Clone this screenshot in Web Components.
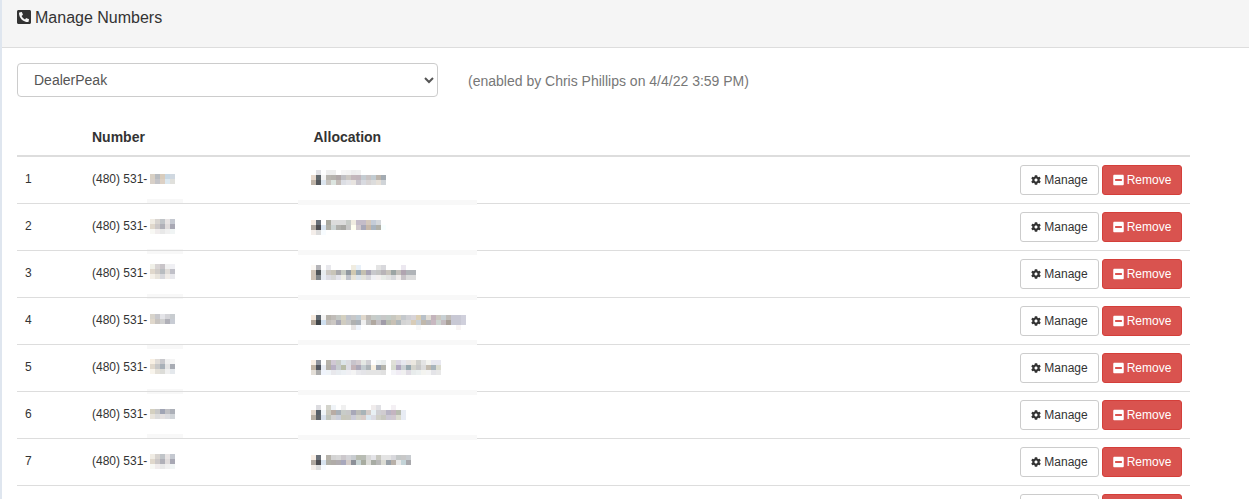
<!DOCTYPE html>
<html>
<head>
<meta charset="utf-8">
<title>Manage Numbers</title>
<style>
html, body { margin: 0; padding: 0; height: 499px; overflow: hidden; background: #fff; }
body { font-family: "Liberation Sans", Arial, sans-serif; color: #333; font-size: 12px; }
</style>
</head>
<body>
<manage-panel>
    <span slot="title">Manage Numbers</span>
    <account-picker note="(enabled by Chris Phillips on 4/4/22 3:59 PM)"></account-picker>
    <number-table></number-table>
</manage-panel>

<script>
// rows of the table. patches are the blurred out bits, rows split by | and - is empty
const rows = [
    {
        numTop: 17, allocTop: 13, strip: [42, 43],
        num: 'd8d0c4 b8bcc0 d8ccbc c8d8e4 d0d8e0|d8d0c8 c4c4c8 dcd0c4 dce8f0 e0e0dc',
        alloc: '- e0e0e4 - eeeeee eeeeee - f6f6f6 f4f4f4 eeeeee f0f0f0 - - - - -|e6d8cc 5f666a f5f5f5 b9b6b0 b5b2ad b0a8a8 c0c0c4 cdc9c4 c4b8bc c2b6bc c5ccd2 c9c4c4 c2ccd2 bdb5ac a3abb2|bfb4a8 55585c dde6f0 c9c5c0 dce5e0 c4bcb8 dcdee4 e4e4e8 e8e4e0 c8c4cc d8dae0 d8d4d4 dcdcdc e6e0d8 d0d4d8'
    },
    {
        numTop: 15, allocTop: 16, strip: [45, 46],
        num: 'f0ece4 d8d4d0 c0c4c8 e8e4e4 c4c8d0|e0d8cc ccc8c8 b0b0b8 e0dcdc a8a8b4|f8f8f4 f0ecec e8e8e8 f0f0f0 f0f4f4',
        alloc: 'f7ede4 6a7078 ffffff a9a9a0 dcdcdc dcdcdc dcdcdc c8ccc8 f0ece0 c4bcc8 c4bcc8 d4c8bc c4ccd8 d4d8dc -|b0a8a0 4c4c50 d8e4f0 b0b0a8 ccd4d4 b0b0ac a8a8a4 c8c8c8 fffff0 d0c8cc a8a8b8 c8b8a8 a8b4c0 b0b0a8 f8ffff|f4eeea dcdcdc f8fcff - - - - - - - - - - - -'
    },
    {
        numTop: 13, allocTop: 14, strip: [43, 44],
        num: 'f0f0e8 d8d4d4 c8c4c8 f0f0f0 f0f0f4|e0d8cc d0ccc8 b8bcc0 e0dcd8 c0c0c8|f4f0e8 e8e4dc d8d8dc f0ece8 e8e8ec',
        alloc: 'fbf8f4 b4b4b8 - e8e8ec - - - - f0ece0 e8f0f8 - - - e4e4e4 d8d8dc - - - ece8f0 - -|d0c4b8 505458 e8ecf0 ccc8c4 c8c4b8 a8a8ac c8ccc4 9098a0 d0c8b0 98a8b4 c4c0b0 a8a4b4 c8c8cc c4c4c4 b8b4b8 c8c4bc 9ca4a4 c4c0bc b0a4b0 b0b4b8 b0b4b8|d0c4b8 808488 e8ecf4 dcdce4 d8d8d8 e4e4ec f0f0e8 c0c4cc e8e4d8 dce4ec e4e4dc d8d8dc f0f0f4 f4f0f0 e8ece8 e4e4e4 d8d8dc f0ecec c8c4c8 dcdcdc dcdcdc'
    },
    {
        numTop: 16, allocTop: 12, strip: [46, 42],
        num: 'd8d4cc c8c8cc e4e4e8 d4d4d8 c8ccd0|e0d8cc c8c4c0 d0d0d0 b0b0b8 c8ccd4',
        alloc: '- fafafa - - - - - - - - - - - - - - - - - - - - - - - - - - - - -|f4e8dc 606870 f4f4f4 b8b4ac c0bcb8 c4c8c4 d4d0c0 c0c4cc c8c8c8 c0ccd4 e0d8cc c0bcb8 c8ccc8 c4cccc c8c8c8 c4ccc8 c8c8c0 d4d0c4 c4c8cc d0d0d4 d8d4d8 dccfb4 b8c0c8 e0dcd4 c4b4bc ccc8c0 c8d0d4 c0bcb8 c8c8d4 c8c8d4 d0d0dc|b0a498 404448 d0e0f0 c4c0bc ccc8c4 a8a8b4 d0ccc0 c8c8c8 b0b0b0 aab0b8 f0f0f0 c0c0c0 b0a8a0 c4c0c4 a09ca8 b8bcb0 c8c0b4 b0b8bc d4d4d4 d8d8d8 d8ccb8 c8d0d8 c0b8ac b8b8bc c8b8c0 ccd4d0 c4bcc0 a8a098 c8c8d4 c8c8d4 d0d0dc|- - - - - - - - e8e4e4 f0f4fc - - - - - - - - - - - f8f8f8 - - - - - - - f8f4f4 -'
    },
    {
        numTop: 14, allocTop: 15, strip: [44, 45],
        num: 'f8f0e4 e0dcd8 c8c8cc f0f0f0 f4f4f4|e0d8cc c8c8c8 a8b0b8 e4e4e4 a8acb4|f8f4ec e4e0d8 dcdcd8 f0f0f0 e4e8ec',
        alloc: 'f8efe4 90949c ffffff b8b4ac d0c8d4 c8ccc8 dce4e8 dcdce0 c8c4cc d4ccd0 e4e8e4 d0d0d4 ffffff f0f4f4 e8ecec ffffff e0e0d8 dcd8e4 e8e8f0 e8e4e4 ece8e0 d0d0cc e4e4e4 f4f4f0 e8e8f0 e8e8f0|c0b4a4 50545c e8ecf4 b4b0a8 b8b0c4 c8ccd0 b8bca8 dcdce4 c4b4b8 aca8b8 c4ccd0 acb4b8 f8f0e0 98a0ac b4b4ac ffffff d8dcd0 b0a8c0 ccd0d4 98a8b0 d4d4cc c8c8c8 dcdcdc c4bcb0 a8b4bc dcdcd0|e4dfd8 acacac f0f4fc f0f4f8 e8e8ec e8ecf0 ecf0f4 f0f0f4 f4f4f4 e8e8ec e4e4e8 e4e4e4 e4e4e4 e4e4e4 e0e0e0 ffffff f4f4f8 f0ecf4 f0f0f0 e0dce4 e8ecec ecf0f0 f4f4f0 f4f4f4 e4e4e8 e8e8e8'
    },
    {
        numTop: 17, allocTop: 13, strip: [42, 43],
        num: 'd4d0c0 c8c8c8 a0a4b4 c0c0c4 acb0b8|e8e4dc dcdcdc e4e0e0 dcdce0 d0d4d8',
        alloc: '- dcdce0 - d4d4cc f0f4f8 - f0f0f0 - - - - - f0ecec e0e0e4 - - f4f0f4 - -|e4d8cc 586068 f0f4f8 cccac0 b8aca4 a8b0b8 c8ccc8 c8c8c8 a8a8b8 bcbcb8 a8b4b8 d4ccc8 e8f0f4 d0d0d4 d0ccd0 b8b4c4 c4b4c0 b8bcb0 e8ecf4|b8b0a4 606468 d8e0ec c0c4bc d4d4d4 ccd0dc c8c8bc c8c8c0 ccccd8 d4d4cc d8ccc8 dce8f0 dcdce4 d0d0c8 c8c8c0 ccc8d4 d0c8d0 dcdcd0 e8ecf4'
    },
    {
        numTop: 15, allocTop: 16, strip: null,
        num: 'f0ece4 d8d4d0 c0c4c8 e8e4e4 c4c8d0|e0d8cc ccc8c8 b0b0b8 e0dcdc a8a8b4|f8f8f4 f0ecec e8e8e8 f0f0f0 f0f4f4',
        alloc: 'f7ede4 6a7078 ffffff b8b4ac d4d4d4 d8d8d8 ccc8cc d4d4d8 c8ccd0 b8bcb0 b8bcb4 d8d8d8 e4e4e8 c8c8c0 e4e4e4 e4e4e4 d8d8dc c4c8c8 c8c8c8 c8ccd0|b0a8a0 4c4c50 d8e4f0 b0b0a8 b0aca8 b0acb0 a8a8bc d4ccc8 8c9098 c8d4d4 a8aca0 dcdcd8 a8aca4 b8b8b8 dcdcd4 98a0a8 b8b0a8 e8e8e8 c4d4d8 a8a8ac|f4eeea dcdcdc f8fcff - - - - - - - - - - - - - - - - -'
    },
    // only the top of the buttons of this row shows in the window
    { num: '', alloc: '', strip: null }
]

const gearPath = 'M487.4 315.7l-42.6-24.6c4.3-23.2 4.3-47 0-70.2l42.6-24.6c4.9-2.8 7.1-8.6 5.5-14-11.1-35.6-30-67.8-54.7-94.6-3.8-4.1-10-5.1-14.8-2.3L380.8 110c-17.9-15.4-38.5-27.3-60.8-35.1V25.8c0-5.6-3.9-10.5-9.4-11.7-36.7-8.2-74.3-7.8-109.2 0-5.5 1.2-9.4 6.1-9.4 11.7V75c-22.2 7.9-42.8 19.8-60.8 35.1L88.7 85.5c-4.9-2.8-11-1.9-14.8 2.3-24.7 26.7-43.6 58.9-54.7 94.6-1.7 5.4.6 11.2 5.5 14L67.3 221c-4.3 23.2-4.3 47 0 70.2l-42.6 24.6c-4.9 2.8-7.1 8.6-5.5 14 11.1 35.6 30 67.8 54.7 94.6 3.8 4.1 10 5.1 14.8 2.3l42.6-24.6c17.9 15.4 38.5 27.3 60.8 35.1v49.2c0 5.6 3.9 10.5 9.4 11.7 36.7 8.2 74.3 7.8 109.2 0 5.5-1.2 9.4-6.1 9.4-11.7v-49.2c22.2-7.9 42.8-19.8 60.8-35.1l42.6 24.6c4.9 2.8 11 1.9 14.8-2.3 24.7-26.7 43.6-58.9 54.7-94.6 1.5-5.5-.7-11.3-5.6-14.1zM256 336c-44.1 0-80-35.9-80-80s35.9-80 80-80 80 35.9 80 80-35.9 80-80 80z'
const minusPath = 'M400 32H48C21.5 32 0 53.5 0 80v352c0 26.5 21.5 48 48 48h352c26.5 0 48-21.5 48-48V80c0-26.5-21.5-48-48-48zM92 296c-6.6 0-12-5.4-12-12v-56c0-6.6 5.4-12 12-12h264c6.6 0 12 5.4 12 12v56c0 6.6-5.4 12-12 12H92z'
const phonePath = 'M400 32H48C21.49 32 0 53.49 0 80v352c0 26.51 21.49 48 48 48h352c26.51 0 48-21.49 48-48V80c0-26.51-21.49-48-48-48zM94 416c-7.033 0-13.057-4.873-14.616-11.627l-14.998-65a15 15 0 0 1 8.707-17.16l69.998-29.999a15 15 0 0 1 17.518 4.289l30.997 37.885c48.944-22.963 88.297-62.858 110.781-110.78l-37.886-30.997a15.001 15.001 0 0 1-4.289-17.518l30-69.998a15 15 0 0 1 17.16-8.707l65 14.998A14.997 14.997 0 0 1 384 126c0 160.292-129.945 290-290 290z'

class ManagePanel extends HTMLElement {
    constructor() {
        super()
        this.attachShadow({ mode: 'open' })
    }

    connectedCallback() {
        this.shadowRoot.innerHTML = `<style>
            :host { display: block; border-left: 2px solid #dfe6ef; height: 499px; box-sizing: border-box; overflow: hidden; }
            .head {
                box-sizing: border-box;
                background: #f5f5f5;
                border-bottom: 1px solid #ddd;
                height: 48px;
                padding: 9px 15px 0;
                font-size: 16px;
                line-height: 18px;
                color: #333;
                display: flex;
                align-items: flex-start;
                gap: 4px;
            }
            .head svg { width: 14px; height: 16px; margin-top: 0; fill: #333; transform: scaleX(-1); }
            .body { padding: 15px 15px 0; isolation: isolate; width: 1173px; }
        </style>
        <div class='head'>
            <svg viewBox='0 0 448 512'><path d='${phonePath}'/></svg>
            <slot name='title'></slot>
        </div>
        <div class='body'><slot></slot></div>`
    }
}

class AccountPicker extends HTMLElement {
    constructor() {
        super()
        this.attachShadow({ mode: 'open' })
    }

    connectedCallback() {
        this.shadowRoot.innerHTML = `<style>
            :host { display: flex; align-items: center; gap: 30px; }
            select {
                width: 421px;
                height: 34px;
                padding: 6px 12px;
                font: 14px "Liberation Sans", Arial, sans-serif;
                color: #555;
                background: #fff;
                border: 1px solid #ccc;
                border-radius: 4px;
            }
            span { font-size: 14px; color: #777; margin-top: 2px; }
        </style>
        <select><option>DealerPeak</option></select>
        <span>${this.getAttribute('note')}</span>`
    }
}

class NumberTable extends HTMLElement {
    constructor() {
        super()
        this.attachShadow({ mode: 'open' })
    }

    connectedCallback() {
        this.shadowRoot.innerHTML = `<style>
            :host { display: block; margin-top: 25px; }
            .head {
                display: grid;
                grid-template-columns: 67px 221.5px 1fr;
                height: 35px;
                box-sizing: border-box;
                border-bottom: 2px solid #ddd;
                font-size: 14px;
                font-weight: bold;
                line-height: 20px;
                color: #333;
                padding: 5px 8px 0 8px;
            }
        </style>
        <div class='head'><div></div><div>Number</div><div>Allocation</div></div>`
        rows.forEach((r, i) => {
            const row = document.createElement('number-row')
            row.data = r
            row.index = i + 1
            this.shadowRoot.appendChild(row)
        })
    }
}

class NumberRow extends HTMLElement {
    constructor() {
        super()
        this.attachShadow({ mode: 'open' })
    }

    connectedCallback() {
        const d = this.data
        const strips = d.strip ? `
            <div class='strip num-strip' style='top:${d.strip[0]}px'></div>
            <div class='strip alloc-strip' style='top:${d.strip[1]}px'></div>` : ''
        const patches = d.num ? `
            <blur-patch style='left:133px;top:${d.numTop}px' cells='${d.num}'></blur-patch>
            <blur-patch style='left:294px;top:${d.allocTop}px' cells='${d.alloc}'></blur-patch>` : ''
        const labels = d.num ? ['Manage', 'Remove'] : ['', '']
        this.shadowRoot.innerHTML = `<style>
            :host {
                display: grid;
                grid-template-columns: 67px 222px 1fr auto;
                align-items: center;
                height: 47px;
                box-sizing: border-box;
                border-bottom: 1px solid #ddd;
                padding: 0 8px;
                position: relative;
                font-size: 12px;
                color: #333;
            }
            .cell { padding-bottom: 2px; }
            .actions { display: flex; gap: 3px; }
            .strip { position: absolute; height: 5px; background: #f8f8f8; }
            .num-strip { left: 130px; width: 36px; z-index: -1; }
            .alloc-strip { left: 281px; width: 179px; z-index: 1; }
        </style>
        <div class='cell'>${d.num ? this.index : ''}</div>
        <div class='cell'>${d.num ? '(480) 531-' : ''}</div>
        <div></div>
        <div class='actions'>
            <row-button>${d.num ? `<svg viewBox='0 0 512 512' width='10' height='10' fill='#333'><path d='${gearPath}'/></svg>` : ''}${labels[0]}</row-button>
            <row-button kind='danger'>${d.num ? `<svg viewBox='0 0 448 512' width='11' height='12' fill='#fff'><path d='${minusPath}'/></svg>` : ''}${labels[1]}</row-button>
        </div>
        ${patches}
        ${strips}`
    }
}

class RowButton extends HTMLElement {
    constructor() {
        super()
        this.attachShadow({ mode: 'open' })
    }

    connectedCallback() {
        this.shadowRoot.innerHTML = `<style>
            :host {
                display: inline-flex;
                align-items: center;
                justify-content: center;
                gap: 3px;
                height: 30px;
                width: 79px;
                box-sizing: border-box;
                border: 1px solid #ccc;
                border-radius: 3px;
                background: #fff;
                color: #333;
                font-size: 12px;
            }
            :host([kind='danger']) {
                width: 80px;
                background: #d9534f;
                border-color: #d43f3a;
                color: #fff;
            }
        </style>
        <slot></slot>`
    }
}

// pixelated smudge, each cell 5x5
class BlurPatch extends HTMLElement {
    constructor() {
        super()
        this.attachShadow({ mode: 'open' })
    }

    connectedCallback() {
        const lines = this.getAttribute('cells').split('|').map(l => l.split(' '))
        const cells = lines.map(l => l.map(c => {
            return `<i style='background:${c === '-' ? 'transparent' : '#' + c}'></i>`
        }).join('')).join('')
        this.shadowRoot.innerHTML = `<style>
            :host {
                position: absolute;
                display: grid;
                grid-template-columns: repeat(${lines[0].length}, 5px);
                grid-auto-rows: 5px;
            }
        </style>${cells}`
    }
}

customElements.define('manage-panel', ManagePanel)
customElements.define('account-picker', AccountPicker)
customElements.define('number-table', NumberTable)
customElements.define('number-row', NumberRow)
customElements.define('row-button', RowButton)
customElements.define('blur-patch', BlurPatch)
</script>
</body>
</html>
